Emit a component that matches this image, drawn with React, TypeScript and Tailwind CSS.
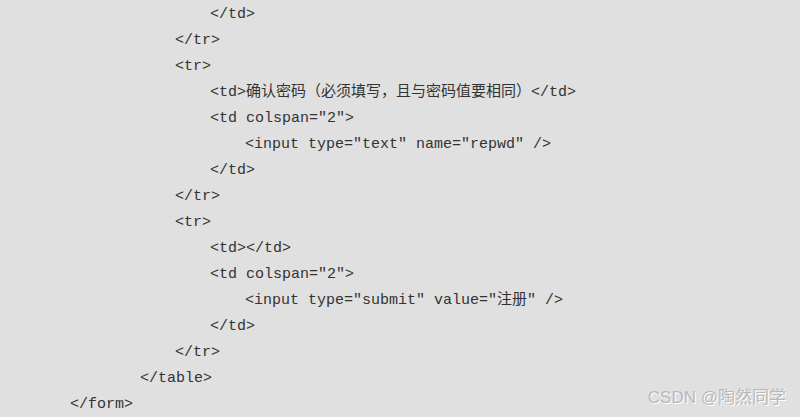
const lines: { indent: string; text: string }[] = [
  { indent: 'pl-[210px]', text: '</td>' },
  { indent: 'pl-[175px]', text: '</tr>' },
  { indent: 'pl-[175px]', text: '<tr>' },
  { indent: 'pl-[210px]', text: '<td>确认密码（必须填写，且与密码值要相同）</td>' },
  { indent: 'pl-[210px]', text: '<td colspan="2">' },
  { indent: 'pl-[245px]', text: '<input type="text" name="repwd" />' },
  { indent: 'pl-[210px]', text: '</td>' },
  { indent: 'pl-[175px]', text: '</tr>' },
  { indent: 'pl-[175px]', text: '<tr>' },
  { indent: 'pl-[210px]', text: '<td></td>' },
  { indent: 'pl-[210px]', text: '<td colspan="2">' },
  { indent: 'pl-[245px]', text: '<input type="submit" value="注册" />' },
  { indent: 'pl-[210px]', text: '</td>' },
  { indent: 'pl-[175px]', text: '</tr>' },
  { indent: 'pl-[140px]', text: '</table>' },
  { indent: 'pl-[70px]', text: '</form>' },
];

export default function App() {
  return (
    <div className="relative w-[800px] h-[417px] overflow-hidden bg-[#e0e0e0]">
      {/* code listing */}
      <div className="flex flex-col pt-[2px] font-['Liberation_Mono','Noto_Sans_CJK_SC',monospace] text-[15px] leading-[26px] text-[#333333]">
        {lines.map((l, i) => (
          <div key={i} className={`${l.indent} whitespace-pre`}>
            {l.text}
          </div>
        ))}
      </div>

      {/* watermark */}
      <div className="absolute right-[14px] bottom-[9px] font-['Liberation_Sans','Noto_Sans_CJK_SC',sans-serif] text-[17px] leading-[20px] text-[#b8b8b8] [text-shadow:1px_1px_0_#ffffff]">
        CSDN @陶然同学
      </div>
    </div>
  );
}
